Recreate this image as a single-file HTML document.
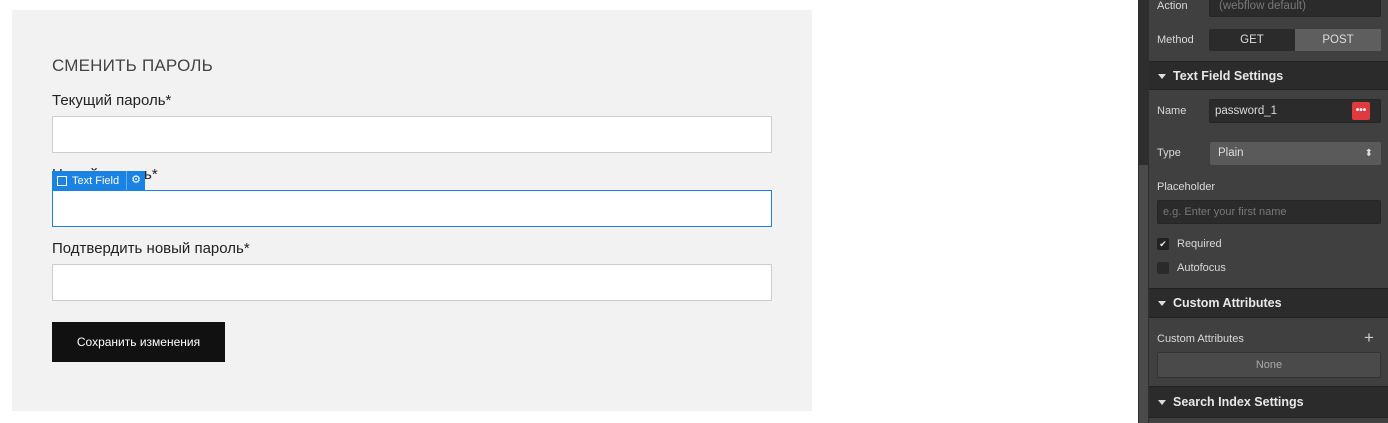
<!DOCTYPE html>
<html><head><meta charset="utf-8"><style>
*{box-sizing:border-box;margin:0;padding:0}
body{width:1388px;height:423px;background:#fff;position:relative;overflow:hidden;font-family:"Liberation Sans",sans-serif}
.a{position:absolute}
.box{left:12px;top:10px;width:800px;height:401px;background:#f2f2f2}
.lbl{font-size:15px;color:#222;left:52px}
.inp{left:52px;width:720px;height:37px;background:#fff;border:1px solid #ccc}
.p{color:#d9d9d9;font-size:11px}
.hdr{left:1149px;width:239px;background:#2b2b2b;color:#e8e8e8;font-weight:bold;font-size:12.5px;padding-left:24px;display:flex;align-items:center;border-top:1px solid #222;border-bottom:1px solid #222}
.hdr:before{content:"";position:absolute;left:9px;top:50%;margin-top:-2px;border-left:4px solid transparent;border-right:4px solid transparent;border-top:5px solid #ddd}
.dinp{background:#2b2b2b;border:1px solid #262626;border-radius:2px}
</style></head><body>
<div class="a box"></div>
<div class="a" style="left:52px;top:56px;font-size:17px;color:#444;letter-spacing:.2px">СМЕНИТЬ ПАРОЛЬ</div>
<div class="a lbl" style="top:92px">Текущий пароль*</div>
<div class="a inp" style="top:116px"></div>
<div class="a lbl" style="top:166px">Новый пароль*</div>
<div class="a inp" style="top:190px;border:1px solid #1a82e2"></div>
<div class="a" style="left:52px;top:171px;width:93px;height:19px;background:#1a82e2;color:#fff;font-size:11px;display:flex;align-items:center">
<span style="width:10px;height:10px;border:1px solid #fff;margin:0 5px 0 5px"></span>Text Field<span style="border-left:1px solid #6ab0f0;height:19px;margin-left:auto;width:19px;text-align:center;line-height:19px;font-size:11px">⚙</span></div>
<div class="a lbl" style="top:240px">Подтвердить новый пароль*</div>
<div class="a inp" style="top:264px"></div>
<div class="a" style="left:52px;top:322px;width:173px;height:40px;background:#111;color:#fff;font-size:12px;text-align:center;line-height:40px">Сохранить изменения</div>

<div class="a" style="left:1138px;top:0;width:250px;height:423px;background:#404040"></div>
<div class="a" style="left:1138px;top:0;width:11px;height:423px;background:#2e2e2e"></div>
<div class="a" style="left:1139px;top:165px;width:9px;height:258px;background:#4a4a4a"></div>
<div class="a p" style="left:1157px;top:0px">Action</div>
<div class="a dinp" style="left:1209px;top:-6px;width:172px;height:23px;color:#777;font-size:11.5px;padding:5px 0 0 9px;line-height:12px">(webflow default)</div>
<div class="a p" style="left:1157px;top:34px">Method</div>
<div class="a" style="left:1209px;top:29px;width:86px;height:22px;background:#2b2b2b;color:#ddd;font-size:11.5px;text-align:center;line-height:22px;border-radius:2px 0 0 2px">GET</div>
<div class="a" style="left:1295px;top:29px;width:86px;height:22px;background:#5e5e5e;color:#ddd;font-size:11.5px;text-align:center;line-height:22px">POST</div>
<div class="a hdr" style="top:61px;height:29px">Text Field Settings</div>
<div class="a p" style="left:1157px;top:105px">Name</div>
<div class="a dinp" style="left:1209px;top:99px;width:172px;height:24px;color:#ddd;font-size:11.5px;padding-left:5px;line-height:22px">password_1</div>
<div class="a" style="left:1352px;top:102px;width:18px;height:18px;background:#e0393e;border-radius:2px;color:#fff;font-size:10px;line-height:18px;text-align:center;font-weight:bold">•••</div>
<div class="a p" style="left:1157px;top:147px">Type</div>
<div class="a" style="left:1210px;top:142px;width:171px;height:23px;background:#5a5a5a;border-radius:2px;color:#ddd;font-size:11.5px;padding-left:8px;line-height:23px">Plain<span style="position:absolute;right:8px;font-size:10px;top:0">⬍</span></div>
<div class="a p" style="left:1157px;top:181px">Placeholder</div>
<div class="a dinp" style="left:1157px;top:200px;width:224px;height:24px;color:#777;font-size:11px;padding-left:5px;line-height:22px">e.g. Enter your first name</div>
<div class="a" style="left:1157px;top:238px;width:12px;height:12px;background:#222;border-radius:2px;color:#eee;font-size:9px;line-height:12px;text-align:center">✔</div>
<div class="a p" style="left:1177px;top:238px">Required</div>
<div class="a" style="left:1157px;top:262px;width:12px;height:12px;background:#2a2a2a;border-radius:2px"></div>
<div class="a p" style="left:1177px;top:262px">Autofocus</div>
<div class="a hdr" style="top:288px;height:30px">Custom Attributes</div>
<div class="a p" style="left:1157px;top:333px">Custom Attributes</div>
<div class="a" style="left:1364px;top:328px;color:#ccc;font-size:17px">+</div>
<div class="a" style="left:1157px;top:352px;width:224px;height:26px;background:#4a4a4a;border:1px solid #333;border-radius:2px;color:#aaa;font-size:11px;text-align:center;line-height:24px">None</div>
<div class="a hdr" style="top:386px;height:32px">Search Index Settings</div>
</body></html>
